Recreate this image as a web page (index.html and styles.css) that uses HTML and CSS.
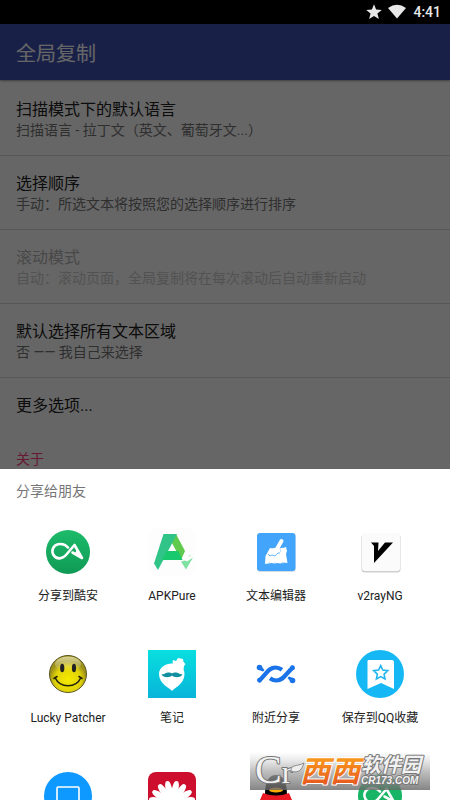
FILE: index.html
```html
<!DOCTYPE html>
<html lang="zh-Hans">
<head>
  <meta charset="UTF-8" />
  <meta name="viewport" content="width=device-width, initial-scale=1.0"/>
  <title>全局复制</title>
  <link rel="stylesheet" href="styles.css">
</head>
<body>

<div class="status-bar">
  <svg width="16" height="16" viewBox="0 0 16 16"><path d="M8 .3l2.100 5.200 5.700.400-4.400 3.500 1.500 5.600L8 12l-4.900 3 1.500-5.600L.2 5.900l5.700-.400z"/></svg>
  <svg width="18" height="16" viewBox="0 0 18 16"><path d="M0 4Q9-2.600 18 4L9 14.500z"/></svg>
  <span>4:41</span>
</div>

<main class="app">
  <header class="app-bar"><h1>全局复制</h1></header>
  <div class="settings">
    <button class="setting"><span class="name">扫描模式下的默认语言</span><span class="summary">扫描语言 - 拉丁文（英文、葡萄牙文...）</span></button>
    <button class="setting"><span class="name">选择顺序</span><span class="summary">手动：所选文本将按照您的选择顺序进行排序</span></button>
    <button class="setting" disabled><span class="name">滚动模式</span><span class="summary">自动：滚动页面，全局复制将在每次滚动后自动重新启动</span></button>
    <button class="setting"><span class="name">默认选择所有文本区域</span><span class="summary">否 —— 我自己来选择</span></button>
    <button class="setting more"><span class="name">更多选项...</span></button>
    <h2>关于</h2>
  </div>
  <div class="scrim"></div>
</main>

<section class="sheet">
  <h2>分享给朋友</h2>
  <div class="targets">
    <button class="target">
      <svg viewBox="0 0 48 48">
        <defs><linearGradient id="green" x2="0" y2="1"><stop stop-color="#1cbb6a"/><stop offset="1" stop-color="#109a55"/></linearGradient></defs>
        <circle cx="24" cy="24" r="22" fill="url(#green)"/>
        <path d="M24 19.500C21 16 17.500 15.500 14 16.300 9 17.500 7 23 9.500 27 12.500 32 18.500 31 22 27L30.500 17 38 30 28.500 24.500" fill="none" stroke="#fff" stroke-width="2.600" stroke-linejoin="round" stroke-linecap="round"/>
        <path d="M31 25l8 5-5.500-9z" fill="#fff"/>
      </svg>
      <span>分享到酷安</span>
    </button>
    <button class="target">
      <svg viewBox="0 0 48 48">
        <rect x=".5" y=".5" width="47" height="47" rx="6" fill="#fdfdfd"/>
        <path d="M28 6l9 17-4 9-9.500-18z" fill="#5fca4d"/>
        <path d="M15.500 6H29L10 42 6 35.500z" fill="#31c489"/>
        <path d="M18.500 23h11.800l4.200 9H14z" fill="#18c96d"/>
        <path d="M33 33.500l4-1 2 1 1.500-1 4.500-3-7 12z" fill="#7ee3a1"/>
        <path d="M41 27h1.500v1.500H41z" fill="#b6efc8"/>
      </svg>
      <span>APKPure</span>
    </button>
    <button class="target">
      <svg viewBox="0 0 48 48">
        <rect x="5" y="6" width="38.500" height="38" rx="3" fill="#d5dce2"/>
        <rect x="5" y="5" width="38.500" height="38" rx="3" fill="#42a5fb"/>
        <path d="M29.500 13l-4.500 8" stroke="#fff" stroke-width="4" stroke-linecap="round"/>
        <path d="M18 20q4 1 7-1 2 2 4 1 3 0 5-1l1 4-1 3 1.500 9-5-.500-2 1-3-.500-3 .500-3-.500L13 36l.500-8z" fill="#fff"/>
        <path d="M16 26l2 2 2-1 3 1 3-3h2" fill="none" stroke="#65b6fb"/>
        <path d="M28 21l1 3M17 36l.500-2M23 36v-2M31 34v2" fill="none" stroke="#a5d3fd" stroke-width=".8"/>
      </svg>
      <span>文本编辑器</span>
    </button>
    <button class="target">
      <svg viewBox="0 0 48 48">
        <rect x="5.500" y="6" width="39" height="38.500" rx="3" fill="#cfcfcf"/>
        <rect x="6" y="5" width="38" height="38" rx="3" fill="#fbfbfb"/>
        <path d="M15 14.500h7.500L22 23l7-8.500h8L18 35V18z"/>
      </svg>
      <span>v2rayNG</span>
    </button>
    <button class="target">
      <svg viewBox="0 0 48 48">
        <defs><radialGradient id="smile" cy=".65"><stop stop-color="#f5ea00"/><stop offset=".7" stop-color="#e0d208"/><stop offset="1" stop-color="#9c911b"/></radialGradient>
        <linearGradient id="shine" x2="0" y2="1"><stop stop-color="#fffde0" stop-opacity=".6"/><stop offset="1" stop-color="#fff" stop-opacity="0"/></linearGradient></defs>
        <circle cx="24" cy="24" r="18.500" fill="url(#smile)" stroke="#5b5520"/>
        <ellipse cx="24" cy="14" rx="13" ry="7.500" fill="url(#shine)"/>
        <ellipse cx="18.200" cy="18" rx="2.100" ry="4.300" fill="#222"/><ellipse cx="30" cy="18" rx="2.100" ry="4.300" fill="#222"/>
        <path d="M11 27.500c5 11 21 11 26 0M10 28.500l3-2M35 26.500l3 2" fill="none" stroke="#252306" stroke-width="1.600" stroke-linecap="round"/>
      </svg>
      <span>Lucky Patcher</span>
    </button>
    <button class="target">
      <svg viewBox="0 0 48 48">
        <defs><linearGradient id="teal" x2="0" y2="1"><stop stop-color="#08dfdf"/><stop offset="1" stop-color="#08b4d9"/></linearGradient></defs>
        <path d="M0 0h48v48H0z" fill="url(#teal)"/>
        <path d="M24 41c-2-3-13-7-13-17 0-6 6-10.500 13-10.500S36.500 18 36.500 24C36.500 34 26 38 24 41z" fill="#fff"/>
        <path d="M25 10l3 1 2-3 5 1 .500 3 2 2-1.500 2-.500 4-9-4-2-3z" fill="#fff"/>
        <path d="M13.500 24c3 1 4-1.500 6.500-1.500 2 0 3 0 4 1 1-1 2-1 4-1 2.500 0 3.500 2.500 6.500 1.500-1 4-8.500 4-10.500 1.500-2 2.500-9.500 2.500-10.500-1.500z" fill="#118fa0"/>
      </svg>
      <span>笔记</span>
    </button>
    <button class="target">
      <svg viewBox="0 0 48 48" fill="none" stroke="#1a73e8" stroke-width="4.200">
        <path d="M6.500 31C14 25 16 17.500 23.500 17.500c2.500 0 4.500.800 6.500 2.300M41.500 17C34 23 32 30.500 24.500 30.500c-2.500 0-4.500-.800-6.500-2.300"/>
        <g fill="#1a73e8" stroke="none"><circle cx="7.500" cy="17.500" r="2.800"/><circle cx="40.500" cy="30.500" r="2.800"/><circle cx="7.500" cy="30.300" r="2.400"/><circle cx="40.500" cy="17.700" r="2.400"/><path d="M9 16l3.500 4-1.500 1.500L7 20zM39 32l-3.500-4 1.500-1.500 4 1.500z"/></g>
      </svg>
      <span>附近分享</span>
    </button>
    <button class="target">
      <svg viewBox="0 0 48 48">
        <circle cx="24" cy="24" r="24" fill="#15b7f5"/>
        <path d="M12 10h24q2 0 2 2v27l-13-6-13.500 6V12q0-2 .500-2z" fill="#fff"/>
        <path d="M24.700 15.600l2.100 4.500 4.900.600-3.600 3.400.900 4.900-4.300-2.400-4.300 2.400.900-4.900-3.600-3.400 4.900-.600z" fill="none" stroke="#22b5f0" stroke-width="1.600"/>
      </svg>
      <span>保存到QQ收藏</span>
    </button>
    <button class="target" aria-label="电脑">
      <svg viewBox="0 0 48 48">
        <circle cx="24" cy="24" r="24" fill="#0d99ff"/>
        <rect x="13" y="15" width="22" height="16" rx="1" fill="none" stroke="#fff" stroke-width="1.600"/>
      </svg>
    </button>
    <button class="target" aria-label="华为">
      <svg viewBox="0 0 48 48">
        <defs><path id="petal" d="M24 31C20 22 20 12 22.500 9q1.500-1 3 0c2.500 3 2.500 13-1.500 22z"/></defs>
        <rect width="48" height="48" rx="8" fill="#ce0e2d"/>
        <g fill="#fff">
          <use href="#petal" transform="rotate(-78 24 32)"/><use href="#petal" transform="rotate(78 24 32)"/>
          <use href="#petal" transform="rotate(-56 24 32)"/><use href="#petal" transform="rotate(56 24 32)"/>
          <use href="#petal" transform="rotate(-34 24 32)"/><use href="#petal" transform="rotate(34 24 32)"/>
          <use href="#petal" transform="rotate(-12 24 32)"/><use href="#petal" transform="rotate(12 24 32)"/>
        </g>
      </svg>
    </button>
    <button class="target" aria-label="QQ">
      <svg viewBox="0 0 48 48">
        <path d="M13 23C13 9 17 3 24 3s11 6 11 20l3 12H10z"/>
        <ellipse cx="24" cy="18" rx="7" ry="2.500" fill="#faab07"/>
        <path d="M11 21q13 5 26 0l3 7q-16 8-32 0z" fill="#eb1923"/>
      </svg>
    </button>
    <button class="target" aria-label="酷安">
      <svg viewBox="0 0 48 48">
        <circle cx="24" cy="24" r="22" fill="#18b566"/>
        <path d="M24 19.500C21 16 17.500 15.500 14 16.300 9 17.500 7 23 9.500 27 12.500 32 18.500 31 22 27L30.500 17 38 30 28.500 24.500" fill="none" stroke="#fff" stroke-width="2.600" stroke-linejoin="round" stroke-linecap="round"/>
      </svg>
    </button>
  </div>
</section>

<svg class="watermark" viewBox="0 0 180 38">
  <defs>
    <linearGradient id="plate" x2="0" y2="1"><stop stop-color="#fff" stop-opacity=".5"/><stop offset=".5" stop-color="#aaa" stop-opacity=".75"/><stop offset="1" stop-color="#666" stop-opacity=".8"/></linearGradient>
    <linearGradient id="orange" x2="0" y2="1"><stop stop-color="#fba01c"/><stop offset="1" stop-color="#e4501e"/></linearGradient>
  </defs>
  <path d="M0 0h180v38H0z" fill="url(#plate)"/>
  <g class="mark" stroke-linejoin="round">
    <text class="logo" x="5" y="31">C<tspan class="small">r</tspan></text>
    <path d="M41 19c0-7 5-4 13-8-2 6-5 11-13 8z" fill="#eee" stroke="#777" stroke-width=".8"/>
    <text class="xixi" x="50" y="30">西西</text>
    <text class="park" x="111" y="20">软件园</text>
    <text class="site" x="111" y="32">CR173.COM</text>
  </g>
</svg>

</body>
</html>
```
FILE: styles.css
```css
* {
  box-sizing: border-box;
}

body {
  margin: 0;
  height: 100vh;
  overflow: hidden;
  position: relative;
  display: flex;
  flex-direction: column;
  background: #000;
  font-family: Roboto, "Noto Sans CJK SC", sans-serif;
}

h1, h2 {
  margin: 0;
  font-weight: normal;
}

button {
  border: 0;
  padding: 0;
  background: none;
  font: inherit;
  color: inherit;
  cursor: pointer;
}

.status-bar {
  height: 24px;
  padding-right: 9px;
  display: flex;
  align-items: center;
  justify-content: flex-end;
  color: #e8e8e8;
  fill: #e8e8e8;
  font-size: 14px;
  font-weight: 500;
}

.status-bar svg + svg {
  margin: 0 7px 0 6px;
}

.app {
  flex: 1;
  position: relative;
  background: #fff;
}

.app-bar {
  height: 56px;
  padding: 0 16px;
  display: flex;
  align-items: center;
  background: #3f51b5;
  color: #fff;
  box-shadow: 0 1px 2px rgba(0, 0, 0, 0.4);
}

.app-bar h1 {
  font-size: 20px;
}

.settings {
  padding-top: 2px;
}

.setting {
  display: block;
  width: 100%;
  padding: 16px 16px 15px;
  border-bottom: 1px solid #dadada;
  text-align: left;
}

.setting span {
  display: block;
}

.name {
  font-size: 16px;
  line-height: 23px;
  color: #212121;
}

.summary {
  font-size: 14px;
  line-height: 19px;
  color: #757575;
}

.setting:disabled .name {
  color: #b4b4b4;
}

.setting:disabled .summary {
  color: #cecece;
}

.setting.more {
  border: 0;
}

.settings h2 {
  padding: 17px 16px;
  font-size: 14px;
  line-height: 20px;
  color: #ff4081;
}

.scrim {
  position: absolute;
  inset: 0;
  background: rgba(0, 0, 0, 0.6);
}

.sheet {
  position: absolute;
  left: 0;
  right: 0;
  bottom: 0;
  height: 331px;
  padding: 12px 18px 0 16px;
  overflow: hidden;
  background: #fff;
}

.sheet h2 {
  font-size: 14px;
  line-height: 20px;
  color: #757575;
}

.targets {
  display: grid;
  grid-template-columns: repeat(4, 1fr);
  grid-auto-rows: 122px;
  margin-top: 27px;
}

.target {
  display: flex;
  flex-direction: column;
  align-items: center;
  gap: 12px;
  font-size: 12px;
  line-height: 16px;
  color: #212121;
}

.target svg {
  width: 48px;
  height: 48px;
}

.watermark {
  position: absolute;
  right: 20px;
  bottom: 10px;
  width: 180px;
  height: 38px;
}

.mark text {
  fill: #f2f2f2;
  stroke: #777;
  stroke-width: 1px;
  paint-order: stroke;
  font-family: "Liberation Sans", "Noto Sans CJK SC", sans-serif;
  font-weight: bold;
  font-style: italic;
}

.mark .logo {
  font-family: "Liberation Serif", serif;
  font-size: 40px;
  font-style: normal;
  font-weight: normal;
  stroke-width: 2px;
}

.mark .small {
  font-size: 32px;
}

.mark .xixi {
  font-size: 30px;
  fill: url(#orange);
  stroke: #fff;
  stroke-width: 2px;
}

.mark .park {
  font-size: 20px;
  stroke-width: 2px;
}

.mark .site {
  font-size: 10px;
  stroke-width: 2px;
}
```
